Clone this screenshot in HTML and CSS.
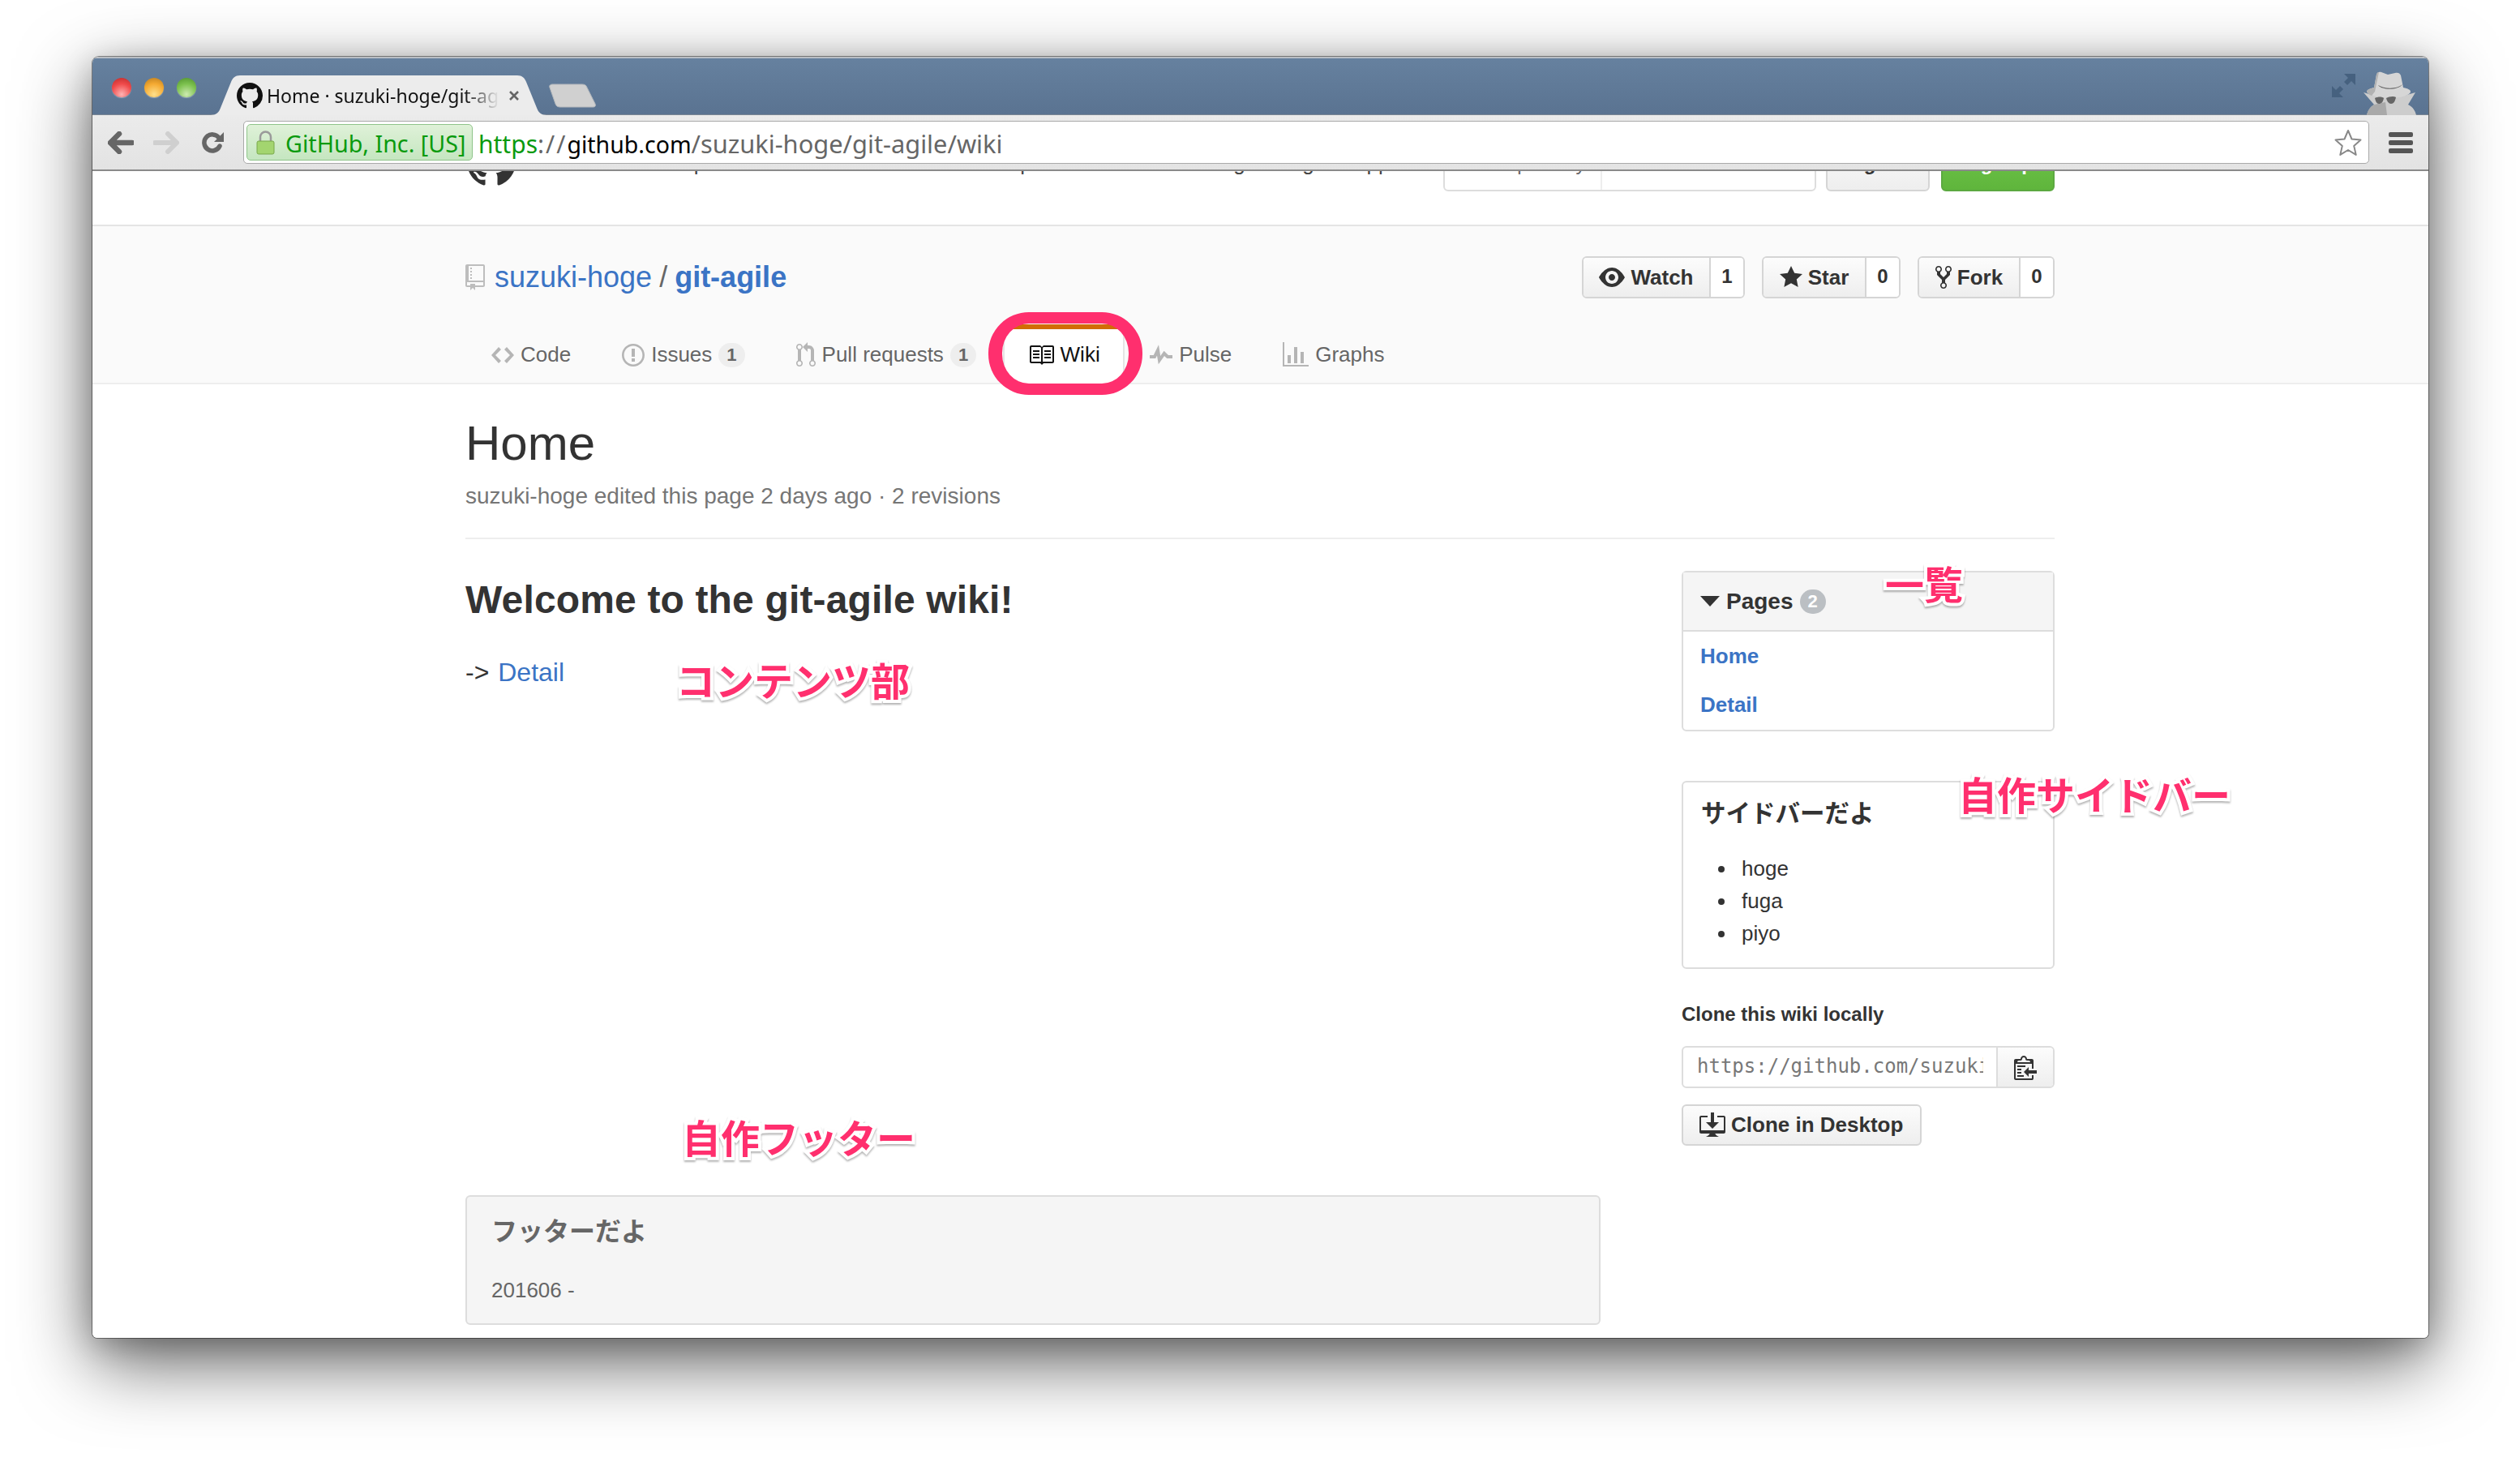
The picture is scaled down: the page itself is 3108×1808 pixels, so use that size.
FILE: index.html
```html
<!DOCTYPE html>
<html lang="ja">

<head>
    <meta charset="utf-8">
    <title>Home · suzuki-hoge/git-agile Wiki</title>
    <link rel="stylesheet" href="styles.css">
</head>

<body>
    <div class="window">

        <!-- browser chrome -->
        <div class="tabstrip">
            <div class="lights">
                <span class="light red"></span>
                <span class="light orange"></span>
                <span class="light green"></span>
            </div>
            <div class="tab">
                <svg class="tab-shape" viewBox="0 0 414 49" preserveAspectRatio="none">
                    <path d="M0 49c6 0 10-3 12-9L25 8c2-5 5-8 11-8h342c6 0 9 3 11 8l13 32c2 6 6 9 12 9z" fill="#ececec" />
                </svg>
                <svg class="favicon" viewBox="0 0 16 16">
                    <path d="M8 0C3.58 0 0 3.58 0 8c0 3.54 2.29 6.53 5.47 7.59.4.07.55-.17.55-.38 0-.19-.01-.82-.01-1.49-2.01.37-2.53-.49-2.69-.94-.09-.23-.48-.94-.82-1.13-.28-.15-.68-.52-.01-.53.63-.01 1.08.58 1.23.82.72 1.21 1.87.87 2.33.66.07-.52.28-.87.51-1.07-1.78-.2-3.64-.89-3.64-3.95 0-.87.31-1.59.82-2.15-.08-.2-.36-1.02.08-2.12 0 0 .67-.21 2.2.82.64-.18 1.32-.27 2-.27.68 0 1.36.09 2 .27 1.53-1.04 2.2-.82 2.2-.82.44 1.1.16 1.92.08 2.12.51.56.82 1.27.82 2.15 0 3.07-1.87 3.75-3.65 3.95.29.25.54.73.54 1.48 0 1.07-.01 1.93-.01 2.2 0 .21.15.46.55.38A8.013 8.013 0 0 0 16 8c0-4.42-3.58-8-8-8z" />
                </svg>
                <span class="tab-title">Home · suzuki-hoge/git-agile</span>
                <svg class="tab-close" viewBox="0 0 14 14">
                    <path d="M2 2l10 10M12 2L2 12" stroke="#666" stroke-width="2.6" />
                </svg>
            </div>
            <svg class="newtab" viewBox="0 0 60 30">
                <path d="M6 1h36c3 0 5 1 6 4l10 20c1 3 0 4-3 4H15c-3 0-5-1-6-4L2 5C1 2 3 1 6 1z" fill="#d0d0d0" stroke="#b4b8bc" stroke-width="1" />
            </svg>
            <svg class="fullscreen" viewBox="0 0 29 29">
                <path d="M29 0v14l-5-5-5 5-4-4 5-5-5-5zM0 29V15l5 5 5-5 4 4-5 5 5 5z" fill="#46617f" />
            </svg>
            <svg class="incognito" viewBox="0 0 68 56">
                <path d="M1 28l14 4h36l14-4-9 15c6 3 9 8 10 13H5c1-5 4-10 9-13z" fill="#cdcdcd" />
                <path d="M14 43l14-3 2 16H5c1-5 4-10 9-13z" fill="#a9a9a9" />
                <path d="M14 22l3-16c1-3 3-4 6-3l8 3 9-2c3-1 6 0 7 3l3 15c6 1 9 3 9 5 0 4-12 8-25 8S6 31 5 27c0-2 4-4 9-5z" fill="#d6d6d6" />
                <path d="M17 6l-3 16c-5 1-9 3-9 5 1 2 3 4 6 5l4-5 5-24c-1 0-3 1-3 3z" fill="#b2b2b2" />
                <path d="M19 19c8 5 24 5 30-1-4 7-25 8-30 1z" fill="#666" />
                <path d="M15 35c4-2 9-2 11 0-1 5-3 7-6 7s-4-3-5-7zM29 35c3-2 9-3 12-1-1 5-3 8-6 8s-5-3-6-7z" fill="#666" />
            </svg>
        </div>

        <div class="toolbar">
            <svg class="nav-icon back" viewBox="0 0 32 28">
                <path d="M14 3L3 14l11 11M4 14h26" fill="none" stroke="#666" stroke-width="6.5" stroke-linecap="round" stroke-linejoin="round" />
            </svg>
            <svg class="nav-icon forward" viewBox="0 0 32 28">
                <path d="M18 3l11 11-11 11M28 14H2" fill="none" stroke="#cfcfcf" stroke-width="6" stroke-linecap="round" stroke-linejoin="round" />
            </svg>
            <svg class="nav-icon reload" viewBox="0 0 27 28">
                <path d="M21 8a10 10 0 1 0 1 10" fill="none" stroke="#666" stroke-width="5.5" stroke-linecap="round" />
                <path d="M27 1v12H15z" fill="#666" />
            </svg>
            <div class="omnibox">
                <div class="ev-badge">
                    <svg class="lock" viewBox="0 0 23 30">
                        <path d="M5 14V8a6.5 6.5 0 0 1 13 0v6" fill="none" stroke="#9a9a9a" stroke-width="2.5" />
                        <rect x="1" y="13" width="21" height="16" rx="2" fill="#a3d56f" stroke="#79a84a" />
                    </svg>
                    <span class="ev-name">GitHub, Inc. [US]</span>
                </div>
                <div class="url"><span class="url-scheme">https</span><span class="url-sep">://</span><span class="url-host">github.com</span><span class="url-path">/suzuki-hoge/git-agile/wiki</span></div>
                <svg class="bookmark" viewBox="0 0 34 34">
                    <path d="M17 2l4.5 10.5 11 1-8.3 7.4 2.5 11L17 26l-9.7 5.9 2.5-11L1.500 13.5l11-1z" fill="#fff" stroke="#888" stroke-width="2" stroke-linejoin="round" />
                </svg>
            </div>
            <div class="menu-btn">
                <span></span>
                <span></span>
                <span></span>
            </div>
        </div>

        <!-- github page -->
        <div class="page">
            <header class="site-header">
                <div class="container site-header-in">
                    <svg class="site-logo" viewBox="0 0 16 16">
                        <path d="M8 0C3.58 0 0 3.58 0 8c0 3.54 2.29 6.53 5.47 7.59.4.07.55-.17.55-.38 0-.19-.01-.82-.01-1.49-2.01.37-2.53-.49-2.69-.94-.09-.23-.48-.94-.82-1.13-.28-.15-.68-.52-.01-.53.63-.01 1.08.58 1.23.82.72 1.21 1.87.87 2.33.66.07-.52.28-.87.51-1.07-1.78-.2-3.64-.89-3.64-3.95 0-.87.31-1.59.82-2.15-.08-.2-.36-1.02.08-2.12 0 0 .67-.21 2.2.82.64-.18 1.32-.27 2-.27.68 0 1.36.09 2 .27 1.53-1.04 2.2-.82 2.2-.82.44 1.1.16 1.92.08 2.12.51.56.82 1.27.82 2.15 0 3.07-1.87 3.75-3.65 3.95.29.25.54.73.54 1.48 0 1.07-.01 1.93-.01 2.2 0 .21.15.46.55.38A8.013 8.013 0 0 0 16 8c0-4.42-3.58-8-8-8z" />
                    </svg>
                    <nav class="site-links">
                        <span>Personal</span>
                        <span>Open source</span>
                        <span>Business</span>
                        <span class="link-explore">Explore</span>
                        <span class="link-pricing">Pricing</span>
                        <span class="link-tight">Blog</span>
                        <span class="link-tight">Support</span>
                    </nav>
                    <div class="site-search">
                        <span class="search-scope">This repository</span>
                        <span class="search-field"></span>
                    </div>
                    <span class="signin">Sign in</span>
                    <span class="signup">Sign up</span>
                </div>
            </header>

            <div class="repohead">
                <div class="container">
                    <div class="repo-row">
                        <h1 class="repo-title">
                            <svg class="repo-icon" viewBox="0 0 12 16">
                                <path d="M4 9H3V8h1v1zm0-3H3v1h1V6zm0-2H3v1h1V4zm0-2H3v1h1V2zm8-1v12c0 .55-.45 1-1 1H6v2l-1.5-1.5L3 16v-2H1c-.55 0-1-.45-1-1V1c0-.55.45-1 1-1h10c.55 0 1 .45 1 1zm-1 10H1v2h2v-1h3v1h5v-2zm0-10H2v9h9V1z" />
                            </svg>
                            <a class="repo-owner">suzuki-hoge</a><span class="repo-sep">/</span><a class="repo-name">git-agile</a>
                        </h1>
                        <ul class="repo-actions">
                            <li class="action">
                                <a class="action-btn">
                                    <svg class="action-icon" viewBox="0 0 16 16"><path d="M8.06 2C3 2 0 8 0 8s3 6 8.06 6C13 14 16 8 16 8s-3-6-7.94-6zM8 12c-2.2 0-4-1.78-4-4 0-2.2 1.8-4 4-4 2.22 0 4 1.8 4 4 0 2.22-1.78 4-4 4zm2-4c0 1.11-.89 2-2 2-1.11 0-2-.89-2-2 0-1.11.89-2 2-2 1.11 0 2 .89 2 2z" /></svg>
                                    Watch
                                </a>
                                <span class="action-count">1</span>
                            </li>
                            <li class="action">
                                <a class="action-btn">
                                    <svg class="action-icon" viewBox="0 0 14 16"><path d="M14 6l-4.9-.64L7 1 4.9 5.36 0 6l3.6 3.26L2.67 14 7 11.67 11.33 14l-.93-4.74L14 6z" /></svg>
                                    Star
                                </a>
                                <span class="action-count">0</span>
                            </li>
                            <li class="action">
                                <a class="action-btn">
                                    <svg class="action-icon" viewBox="0 0 10 16"><path d="M8 1a1.993 1.993 0 0 0-1 3.72V6L5 8 3 6V4.72A1.993 1.993 0 0 0 2 1a1.993 1.993 0 0 0-1 3.72V6.5l3 3v1.78A1.993 1.993 0 0 0 5 15a1.993 1.993 0 0 0 1-3.72V9.5l3-3V4.72A1.993 1.993 0 0 0 8 1zM2 4.2C1.34 4.2.8 3.65.8 3c0-.65.55-1.2 1.2-1.2.65 0 1.2.55 1.2 1.2 0 .65-.55 1.2-1.2 1.2zm3 10c-.66 0-1.2-.55-1.2-1.2 0-.65.55-1.2 1.2-1.2.65 0 1.2.55 1.2 1.2 0 .65-.55 1.2-1.2 1.2zm3-10c-.66 0-1.2-.55-1.2-1.2 0-.65.55-1.2 1.2-1.2.65 0 1.2.55 1.2 1.2 0 .65-.55 1.2-1.2 1.2z" /></svg>
                                    Fork
                                </a>
                                <span class="action-count">0</span>
                            </li>
                        </ul>
                    </div>

                    <nav class="repo-nav">
                        <a class="nav-item nav-code">
                            <svg class="nav-svg" viewBox="0 0 14 16"><path d="M9.5 3L8 4.5 11.5 8 8 11.5 9.5 13 14 8 9.5 3zm-5 0L0 8l4.5 5L6 11.5 2.5 8 6 4.5 4.5 3z" /></svg>
                            Code
                        </a>
                        <a class="nav-item nav-issues">
                            <svg class="nav-svg" viewBox="0 0 14 16"><path d="M7 2.3c3.14 0 5.7 2.56 5.7 5.7s-2.56 5.7-5.7 5.7A5.71 5.71 0 0 1 1.3 8c0-3.14 2.56-5.7 5.7-5.7zM7 1C3.14 1 0 4.14 0 8s3.14 7 7 7 7-3.14 7-7-3.14-7-7-7zm1 3H6v5h2V4zm0 6H6v2h2v-2z" /></svg>
                            Issues <span class="counter">1</span>
                        </a>
                        <a class="nav-item nav-pulls">
                            <svg class="nav-svg" viewBox="0 0 12 16"><path d="M11 11.28V5c-.03-.78-.34-1.47-.94-2.06C9.46 2.35 8.78 2.03 8 2H7V0L4 3l3 3V4h1c.27.02.48.11.69.31.21.2.3.42.31.69v6.28A1.993 1.993 0 0 0 10 15a1.993 1.993 0 0 0 1-3.72zm-1 2.92c-.66 0-1.2-.55-1.2-1.2 0-.65.55-1.2 1.2-1.2.65 0 1.2.55 1.2 1.2 0 .65-.55 1.2-1.2 1.2zM4 3c0-1.11-.89-2-2-2a1.993 1.993 0 0 0-1 3.72v6.56A1.993 1.993 0 0 0 2 15a1.993 1.993 0 0 0 1-3.72V4.72c.59-.34 1-.98 1-1.72zm-.8 10c0 .66-.55 1.2-1.2 1.2-.65 0-1.2-.55-1.2-1.2 0-.65.55-1.2 1.2-1.2.65 0 1.2.55 1.2 1.2zM2 4.2C1.34 4.2.8 3.65.8 3c0-.65.55-1.2 1.2-1.2.65 0 1.2.55 1.2 1.2 0 .65-.55 1.2-1.2 1.2z" /></svg>
                            Pull requests <span class="counter">1</span>
                        </a>
                        <a class="nav-item nav-wiki selected">
                            <svg class="nav-svg" viewBox="0 0 16 16"><path d="M3 5h4v1H3V5zm0 3h4V7H3v1zm0 2h4V9H3v1zm11-5h-4v1h4V5zm0 2h-4v1h4V7zm0 2h-4v1h4V9zm2-6v9c0 .55-.45 1-1 1H9.5l-1 1-1-1H2c-.55 0-1-.45-1-1V3c0-.55.45-1 1-1h5.5l1 1 1-1H15c.55 0 1 .45 1 1zm-8 .5L7.5 3H2v9h6V3.5zm7-.5H9.5l-.5.5V12h6V3z" /></svg>
                            Wiki
                            <span class="ring"></span>
                        </a>
                        <a class="nav-item nav-pulse">
                            <svg class="nav-svg" viewBox="0 0 14 16"><path d="M11.5 8L8.8 5.4 6.6 8.5 5.5 1.6 2.38 8H0v2h3.6l.9-1.8.9 5.4L9 8.5l1.6 1.5H14V8h-2.5z" /></svg>
                            Pulse
                        </a>
                        <a class="nav-item nav-graphs">
                            <svg class="nav-svg" viewBox="0 0 16 16"><path d="M16 14v1H0V0h1v14h15zM5 13H3V8h2v5zm4 0H7V3h2v10zm4 0h-2V6h2v7z" /></svg>
                            Graphs
                        </a>
                    </nav>
                </div>
            </div>

            <main class="container wiki">
                <h1 class="wiki-title">Home</h1>
                <div class="wiki-meta">suzuki-hoge edited this page 2 days ago · 2 revisions</div>

                <div class="wiki-body">
                    <section class="wiki-content">
                        <div class="markdown">
                            <h1>Welcome to the git-agile wiki!</h1>
                            <p>-&gt; <a>Detail</a></p>
                        </div>
                        <div class="wiki-footer">
                            <h2>フッターだよ</h2>
                            <p>201606 -</p>
                        </div>
                    </section>

                    <aside class="wiki-side">
                        <div class="pages-box">
                            <div class="pages-head">
                                <span class="caret"></span>
                                <span>Pages</span>
                                <span class="pages-count">2</span>
                            </div>
                            <ul class="pages-list">
                                <li><a>Home</a></li>
                                <li><a>Detail</a></li>
                            </ul>
                        </div>

                        <div class="side-box">
                            <h2>サイドバーだよ</h2>
                            <ul>
                                <li>hoge</li>
                                <li>fuga</li>
                                <li>piyo</li>
                            </ul>
                        </div>

                        <h3 class="clone-title">Clone this wiki locally</h3>
                        <div class="clone-url">
                            <span class="clone-input">https://github.com/suzuki-hoge/git-agile.wiki.git</span>
                            <span class="clone-copy">
                                <svg class="clone-icon" viewBox="0 0 14 16"><path d="M2 13h4v1H2v-1zm5-6H2v1h5V7zm2 3V8l-3 3 3 3v-2h5v-2H9zM4.5 9H2v1h2.5V9zM2 12h2.5v-1H2v1zm9 1h1v2c-.02.28-.11.52-.3.7-.19.18-.42.28-.7.3H1c-.55 0-1-.45-1-1V4c0-.55.45-1 1-1h3c0-1.11.89-2 2-2 1.11 0 2 .89 2 2h3c.55 0 1 .45 1 1v5h-1V6H1v9h10v-2zM2 5h8c0-.55-.45-1-1-1H8c-.55 0-1-.45-1-1s-.45-1-1-1-1 .45-1 1-.45 1-1 1H3c-.55 0-1 .45-1 1z" /></svg>
                            </span>
                        </div>
                        <a class="clone-desktop">
                            <svg class="clone-icon" viewBox="0 0 16 16"><path d="M4 6h3V0h2v6h3l-4 4-4-4zm11-4h-4v1h4v8H1V3h4V2H1c-.55 0-1 .45-1 1v9c0 .55.45 1 1 1h5.34c-.25.61-.86 1.39-2.34 2h8c-1.48-.61-2.09-1.39-2.34-2H15c.55 0 1-.45 1-1V3c0-.55-.45-1-1-1z" /></svg>
                            Clone in Desktop
                        </a>
                    </aside>
                </div>
            </main>

            <!-- notes drawn over the screenshot -->
            <span class="note note-list">一覧</span>
            <span class="note note-side">自作サイドバー</span>
            <span class="note note-content">コンテンツ部</span>
            <span class="note note-footer">自作フッター</span>
        </div>
    </div>
</body>

</html>
```

FILE: styles.css
```css
* {
    box-sizing: border-box;
}

html,
body {
    margin: 0;
    height: 100%;
    background-color: #fff;
}

body {
    padding: 70px 113px 0 114px;
    font-family: "Liberation Sans", Arial, "Noto Sans CJK JP", sans-serif;
    color: #333;
    overflow: hidden;
}

a {
    color: #3b74c5;
}

h1,
h2,
h3,
p,
ul {
    margin: 0;
    padding: 0;
}

ul {
    list-style: none;
}

.window {
    width: 2881px;
    height: 1580px;
    display: flex;
    flex-direction: column;
    border-radius: 8px 8px 6px 6px;
    overflow: hidden;
    box-shadow: 0 30px 90px rgba(0, 0, 0, .62), 0 8px 36px rgba(0, 0, 0, .2), 0 0 0 1px rgba(60, 60, 60, .55);
}

/* browser chrome */
.tabstrip {
    height: 72px;
    flex: none;
    display: flex;
    align-items: flex-start;
    position: relative;
    background: linear-gradient(#66819f, #5a7391);
    border-top: 2px solid #b9bec4;
    border-bottom: 1px solid #7b8794;
}

.lights {
    display: flex;
    gap: 16px;
    padding: 24px 0 0 24px;
}

.light {
    width: 24px;
    height: 24px;
    border-radius: 50%;
    box-shadow: 0 1px 1px rgba(255, 255, 255, .35);
}

.red {
    background: radial-gradient(circle at 50% 85%, #ffb3b3, #f04a4a 55%, #b92a2a);
}

.orange {
    background: radial-gradient(circle at 50% 85%, #ffe08c, #f5aa32 55%, #b87a1c);
}

.green {
    background: radial-gradient(circle at 50% 85%, #cdeab0, #7cc14e 55%, #4d8f2c);
}

.tab {
    width: 414px;
    height: 49px;
    margin: 21px 0 0 18px;
    display: flex;
    align-items: center;
    position: relative;
}

.tab-shape {
    position: absolute;
    left: 0;
    top: 0;
    width: 100%;
    height: 100%;
}

.favicon {
    position: relative;
    width: 32px;
    height: 32px;
    margin-left: 32px;
    fill: #111;
    flex: none;
}

.tab-title {
    position: relative;
    width: 290px;
    flex: none;
    margin-left: 5px;
    overflow: hidden;
    white-space: nowrap;
    font-family: "Noto Sans", sans-serif;
    font-size: 23px;
    color: #111;
    -webkit-mask-image: linear-gradient(to right, #000 84%, transparent 99%);
    mask-image: linear-gradient(to right, #000 84%, transparent 99%);
}

.tab-close {
    position: relative;
    width: 14px;
    height: 14px;
    margin-left: 8px;
    flex: none;
}

.newtab {
    width: 60px;
    height: 30px;
    margin: 31px 0 0 2px;
}

.fullscreen {
    width: 29px;
    height: 29px;
    position: absolute;
    left: 2762px;
    top: 19px;
}

.incognito {
    width: 68px;
    height: 56px;
    position: absolute;
    left: 2800px;
    top: 14px;
}

.toolbar {
    height: 69px;
    flex: none;
    display: flex;
    align-items: center;
    padding-left: 19px;
    background: linear-gradient(#ebebeb, #e3e3e3);
    border-bottom: 2px solid #8a8a8a;
}

.nav-icon {
    flex: none;
    height: 28px;
}

.back,
.forward {
    width: 32px;
}

.forward {
    margin-left: 24px;
}

.reload {
    width: 27px;
    margin-left: 28px;
}

.omnibox {
    width: 2622px;
    height: 53px;
    margin-left: 24px;
    padding: 0 3px;
    display: flex;
    align-items: center;
    background-color: #fff;
    border: 1px solid #a9a9a9;
    border-radius: 5px;
}

.ev-badge {
    width: 279px;
    height: 45px;
    flex: none;
    display: flex;
    align-items: center;
    padding-left: 11px;
    background: linear-gradient(#dff1d8, #c5e6c0);
    border: 1px solid #8fc48a;
    border-radius: 5px;
    font-family: "Noto Sans", sans-serif;
    font-size: 28.7px;
    color: #0a9a0e;
    white-space: nowrap;
    overflow: hidden;
}

.ev-name {
    padding-top: 2px;
}

.lock {
    width: 23px;
    height: 30px;
    margin-right: 13px;
    flex: none;
}

.url {
    flex: 1;
    margin-left: 7px;
    padding-top: 2px;
    font-family: "Noto Sans", sans-serif;
    font-size: 30px;
    white-space: nowrap;
}

.url-scheme {
    color: #0a9a0e;
}

.url-sep,
.url-path {
    color: #666;
}

.url-sep {
    letter-spacing: 2px;
}

.url-host {
    font-size: 28.5px;
    color: #000;
}

.url-path {
    font-size: 30.8px;
}

.bookmark {
    width: 34px;
    height: 34px;
    margin-right: 5px;
}

.menu-btn {
    width: 30px;
    margin-left: 24px;
    display: flex;
    flex-direction: column;
    gap: 4px;
}

.menu-btn span {
    height: 6px;
    border-radius: 2px;
    background-color: #555;
}

/* github page */
.page {
    flex: 1;
    min-height: 0;
    position: relative;
    overflow: hidden;
    background-color: #fff;
}

.container {
    width: 1960px;
    margin-left: 460px;
}

.site-header {
    height: 68px;
    overflow: hidden;
    display: flex;
    align-items: flex-end;
    border-bottom: 2px solid #e4e4e4;
}

.site-header-in {
    display: flex;
    align-items: flex-end;
    padding-bottom: 41px;
}

.site-logo {
    width: 60px;
    height: 60px;
    flex: none;
    margin: 0 0 6px 2px;
    fill: #333;
}

.site-links {
    flex: 1;
    height: 36px;
    display: flex;
    gap: 40px;
    margin-bottom: 17px;
    padding-left: 57px;
    font-size: 26px;
    line-height: 36px;
    color: #444;
    white-space: nowrap;
}

.link-explore {
    margin-left: 58px;
}

.link-pricing {
    margin-left: 100px;
}

.link-tight {
    margin-left: -7px;
}

.site-search {
    width: 460px;
    height: 60px;
    display: flex;
    border: 2px solid #ddd;
    border-radius: 6px;
    font-size: 24px;
    color: #666;
}

.search-scope {
    width: 194px;
    height: 56px;
    padding-left: 16px;
    border-right: 2px solid #eee;
    line-height: 48px;
    white-space: nowrap;
}

.signin,
.signup {
    height: 68px;
    display: flex;
    align-items: center;
    justify-content: center;
    border-radius: 6px;
    font-size: 24px;
    font-weight: bold;
}

.signin {
    width: 128px;
    margin-left: 12px;
    color: #333;
    background: linear-gradient(#fafafa, #eee);
    border: 2px solid #d5d5d5;
}

.signup {
    width: 140px;
    margin-left: 14px;
    color: #fff;
    background: linear-gradient(#72c84c, #5fb53c);
    border: 2px solid #5ca941;
}

.repohead {
    height: 195px;
    background-color: #fafafa;
    border-bottom: 2px solid #eee;
}

.repo-row {
    height: 121px;
    display: flex;
    justify-content: space-between;
    padding-top: 37px;
}

.repo-title {
    display: flex;
    align-items: center;
    height: 52px;
    font-size: 36px;
    font-weight: normal;
}

.repo-icon {
    width: 24px;
    height: 32px;
    margin-right: 12px;
    fill: #bdbdbd;
}

.repo-sep {
    margin: 0 9px;
    color: #666;
}

.repo-name {
    font-weight: bold;
}

.repo-actions {
    display: flex;
    gap: 21px;
}

.action {
    height: 52px;
    display: flex;
    border: 2px solid #d5d5d5;
    border-radius: 6px;
    font-size: 26px;
    font-weight: bold;
    overflow: hidden;
}

.action-btn {
    display: flex;
    align-items: center;
    justify-content: center;
    gap: 7px;
    height: 48px;
    color: #333;
    background: linear-gradient(#fcfcfc, #eee);
    border-right: 2px solid #d5d5d5;
}

.action:nth-child(1) .action-btn {
    width: 157px;
}

.action:nth-child(2) .action-btn {
    width: 127px;
}

.action:nth-child(3) .action-btn {
    width: 125px;
}

.action-icon {
    height: 32px;
    fill: #333;
    flex: none;
}

.action:nth-child(1) .action-icon {
    width: 32px;
}

.action:nth-child(2) .action-icon {
    width: 28px;
}

.action:nth-child(3) .action-icon {
    width: 20px;
}

.action-count {
    width: 40px;
    background-color: #fff;
    text-align: center;
    line-height: 46px;
    font-size: 24px;
}

.repo-nav {
    height: 72px;
    display: flex;
    font-size: 26px;
    color: #666;
}

.nav-item {
    display: flex;
    align-items: center;
    gap: 8px;
    color: #666;
    white-space: nowrap;
    height: 72px;
    padding-top: 3px;
    position: relative;
}

.nav-svg {
    height: 32px;
    fill: #b5b5b5;
    flex: none;
}

.nav-code {
    margin-left: 32px;
}

.nav-code .nav-svg {
    width: 28px;
}

.nav-issues {
    margin-left: 63px;
}

.nav-issues .nav-svg {
    width: 28px;
}

.nav-pulls {
    margin-left: 63px;
}

.nav-pulls .nav-svg {
    width: 24px;
}

.nav-wiki {
    width: 150px;
    height: 74px;
    margin-left: 33px;
    padding-top: 0;
    padding-bottom: 5px;
    justify-content: center;
    color: #111;
    background-color: #fff;
    border-top: 6px solid #d26d06;
    border-left: 2px solid #e5e5e5;
    border-right: 2px solid #e5e5e5;
}

.nav-wiki .nav-svg {
    width: 32px;
    fill: #111;
}

.nav-pulse {
    margin-left: 31px;
}

.nav-pulse .nav-svg {
    width: 28px;
}

.nav-graphs {
    margin-left: 63px;
}

.nav-graphs .nav-svg {
    width: 32px;
}

.counter {
    display: inline-block;
    min-width: 32px;
    height: 30px;
    padding: 0 10px;
    border-radius: 15px;
    background-color: #eee;
    text-align: center;
    line-height: 30px;
    font-size: 22px;
    font-weight: bold;
}

.ring {
    position: absolute;
    left: -20px;
    top: -21px;
    width: 190px;
    height: 102px;
    border-style: solid;
    border-color: #ff2f6e;
    border-width: 14px 17px;
    border-radius: 50px;
}

.wiki {
    padding-top: 39px;
}

.wiki-title {
    font-size: 60px;
    font-weight: normal;
    line-height: 68px;
}

.wiki-meta {
    margin-top: 13px;
    padding-bottom: 33px;
    border-bottom: 2px solid #eee;
    font-size: 28px;
    line-height: 36px;
    color: #767676;
}

.wiki-body {
    display: flex;
    justify-content: space-between;
    align-items: flex-start;
}

.wiki-content {
    width: 1400px;
}

.markdown {
    height: 809px;
    padding-top: 44px;
}

.markdown h1 {
    font-size: 48px;
    line-height: 62px;
    letter-spacing: .15px;
}

.markdown p {
    margin-top: 33px;
    font-size: 32px;
    line-height: 50px;
}

.markdown p a {
    margin-left: 2px;
}

.wiki-footer {
    height: 160px;
    padding: 23px 30px;
    background-color: #f5f5f5;
    border: 2px solid #ddd;
    border-radius: 6px;
    color: #666;
}

.wiki-footer h2 {
    font-size: 32px;
    line-height: 40px;
}

.wiki-footer p {
    margin-top: 34px;
    font-size: 26px;
    line-height: 36px;
}

.wiki-side {
    width: 460px;
    padding-top: 39px;
}

.pages-box {
    height: 198px;
    border: 2px solid #ddd;
    border-radius: 6px;
}

.pages-head {
    height: 73px;
    display: flex;
    align-items: center;
    padding-left: 21px;
    background-color: #f5f5f5;
    border-bottom: 2px solid #ddd;
    font-size: 28px;
    font-weight: bold;
}

.caret {
    width: 0;
    height: 0;
    margin-right: 8px;
    border-left: 12px solid transparent;
    border-right: 12px solid transparent;
    border-top: 13px solid #333;
}

.pages-count {
    width: 32px;
    height: 30px;
    margin-left: 8px;
    border-radius: 15px;
    background-color: #bbbfc3;
    color: #fff;
    text-align: center;
    font-size: 22px;
    line-height: 30px;
}

.pages-list {
    padding: 14px 21px 0;
    font-size: 26px;
    font-weight: bold;
}

.pages-list li {
    height: 60px;
    line-height: 32px;
}

.side-box {
    height: 232px;
    margin-top: 61px;
    padding: 20px 22px 0;
    border: 2px solid #ddd;
    border-radius: 6px;
}

.side-box h2 {
    font-size: 30.5px;
    line-height: 36px;
}

.side-box ul {
    margin-top: 30px;
    padding-left: 44px;
    list-style: disc;
    font-size: 26px;
    line-height: 40px;
}

.side-box li {
    padding-left: 6px;
}

.clone-title {
    margin-top: 40px;
    font-size: 24px;
    line-height: 32px;
}

.clone-url {
    height: 52px;
    margin-top: 23px;
    display: flex;
    border: 2px solid #ddd;
    border-radius: 6px;
    overflow: hidden;
}

.clone-input {
    width: 353px;
    flex: none;
    margin: 0 16px 0 17px;
    overflow: hidden;
    white-space: nowrap;
    font-family: "DejaVu Sans Mono", "Liberation Mono", monospace;
    font-size: 24px;
    line-height: 46px;
    color: #777;
}

.clone-copy {
    flex: 1;
    display: flex;
    align-items: center;
    justify-content: center;
    background: linear-gradient(#fcfcfc, #eee);
    border-left: 2px solid #ddd;
}

.clone-icon {
    width: 28px;
    height: 32px;
    fill: #333;
    flex: none;
}

.clone-desktop {
    width: 296px;
    height: 51px;
    margin-top: 20px;
    display: flex;
    align-items: center;
    padding-left: 20px;
    gap: 7px;
    background: linear-gradient(#fcfcfc, #eee);
    border: 2px solid #d5d5d5;
    border-radius: 6px;
    color: #333;
    font-size: 26px;
    font-weight: bold;
    white-space: nowrap;
}

.clone-desktop .clone-icon {
    width: 32px;
}

/* annotations */
.note {
    position: absolute;
    font-family: "Noto Sans CJK JP", sans-serif;
    font-size: 48px;
    line-height: 60px;
    font-weight: bold;
    color: #ff2f6e;
    white-space: nowrap;
    -webkit-text-stroke: 8px #fff;
    paint-order: stroke fill;
    filter: drop-shadow(0 2px 1px rgba(0, 0, 0, .3));
}

.note-list {
    left: 2211px;
    top: 477px;
}

.note-side {
    left: 2301px;
    top: 737px;
}

.note-content {
    left: 720px;
    top: 596px;
}

.note-footer {
    left: 727px;
    top: 1160px;
}
```
